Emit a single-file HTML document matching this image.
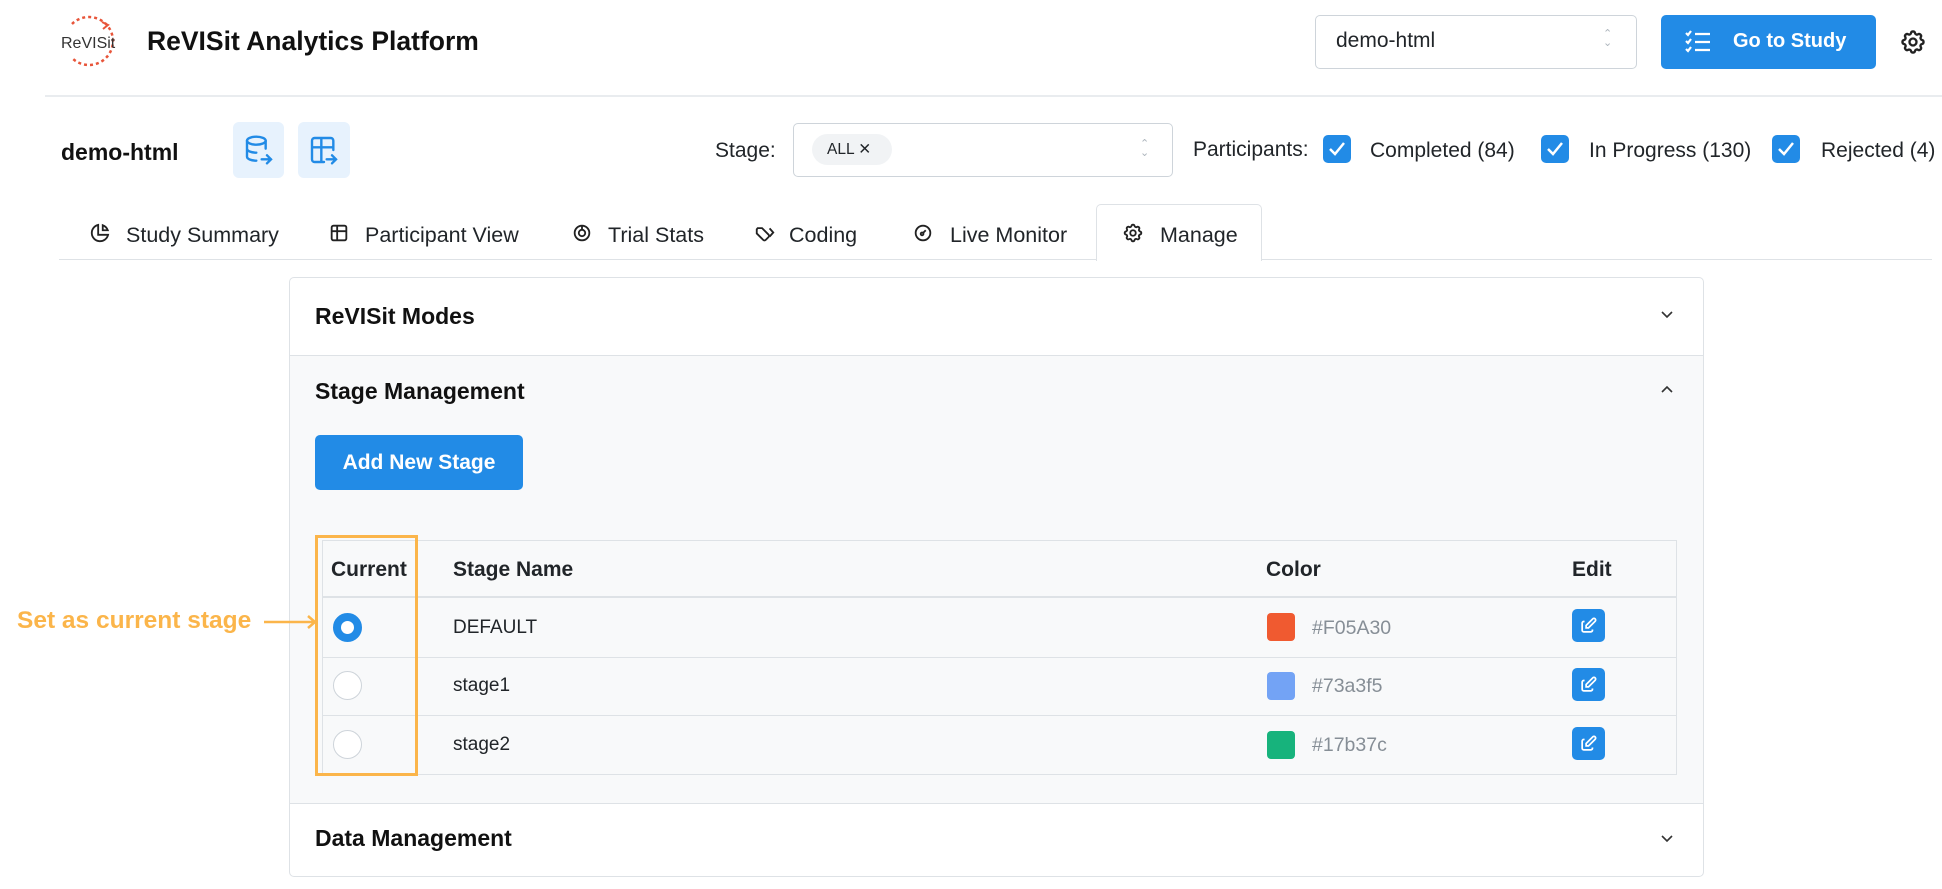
<!DOCTYPE html>
<html><head><meta charset="utf-8"><style>
*{box-sizing:border-box;margin:0;padding:0}
body{width:1942px;height:889px;background:#fff;font-family:"Liberation Sans",sans-serif;color:#212529;position:relative;overflow:hidden;font-size:19px}
.a{position:absolute}
.bold{font-weight:bold}
.cb{position:absolute;width:28px;height:28px;background:#228be6;border-radius:5px;top:135px}
.cb svg{position:absolute;left:5px;top:6px}
.p{font-size:21px}
.tab{position:absolute;top:223px;font-size:21.5px;color:#212529}
.tab svg{position:absolute;top:-1px}
.row{position:absolute;left:322px;width:1355px;border-bottom:1px solid #dee2e6}
.radio{position:absolute;left:333px;width:29px;height:29px;border-radius:50%;border:1.5px solid #ced4da;background:#fff}
.sw{position:absolute;left:1267px;width:28px;height:28px;border-radius:4px}
.hex{position:absolute;left:1312px;color:#868e96;font-size:19.5px}
.eb{position:absolute;left:1572px;width:33px;height:33px;border-radius:5px;background:#228be6}
.eb svg{position:absolute;left:7px;top:7px}
.h{font-size:23px;color:#111}
</style></head><body>
<!-- header -->
<svg class="a" style="left:58px;top:14px" width="64" height="54" viewBox="0 0 64 54">
<path d="M14 10 A24 24 0 1 1 14 44" fill="none" stroke="#e8553a" stroke-width="2.5" stroke-dasharray="3 3"/>
<path d="M44 8 l6 3 -5 4" fill="none" stroke="#e8553a" stroke-width="2"/>
<text x="3" y="34" font-family="Liberation Sans Narrow, Liberation Sans" font-size="16" fill="#333">ReVISit</text>
</svg>
<div class="a bold" style="left:147px;top:26px;font-size:26.5px;color:#111">ReVISit Analytics Platform</div>
<div class="a" style="left:1315px;top:15px;width:322px;height:54px;border:1px solid #ced4da;border-radius:5px"></div>
<div class="a p" style="left:1336px;top:29px">demo-html</div>
<div class="a" style="left:1603px;top:30px;font-size:11px;color:#adb5bd;line-height:9px">⌃<br>⌄</div>
<div class="a" style="left:1661px;top:15px;width:215px;height:54px;background:#228be6;border-radius:5px"></div>
<svg class="a" style="left:1684px;top:29px" width="28" height="26" viewBox="0 0 28 26" fill="none" stroke="#fff" stroke-width="2.2"><path d="M2 4l2 2 3-4M2 12l2 2 3-4M2 20l2 2 3-4M11 5h15M11 13h15M11 21h15"/></svg>
<div class="a bold" style="left:1733px;top:30px;font-size:20px;color:#fff">Go to Study</div>
<svg class="a" style="left:1899px;top:28px" width="28" height="28" viewBox="0 0 24 24" fill="none" stroke="#222" stroke-width="2"><path d="M10.3 4.3c.4-1.8 3-1.8 3.4 0a1.7 1.7 0 0 0 2.6 1.1c1.5-.9 3.3.8 2.4 2.4a1.7 1.7 0 0 0 1 2.5c1.8.4 1.8 3 0 3.4a1.7 1.7 0 0 0-1 2.6c.9 1.5-.9 3.300-2.4 2.4a1.7 1.7 0 0 0-2.6 1c-.4 1.8-3 1.8-3.4 0a1.7 1.7 0 0 0-2.5-1c-1.6.9-3.3-.9-2.4-2.4a1.7 1.7 0 0 0-1.1-2.6c-1.8-.4-1.8-3 0-3.4a1.7 1.7 0 0 0 1.1-2.5c-.9-1.6.9-3.3 2.4-2.4 1 .6 2.3.1 2.5-1.1z"/><circle cx="12" cy="12" r="3"/></svg>
<div class="a" style="left:45px;top:95px;width:1897px;height:2px;background:#e9ecef"></div>
<!-- row 2 -->
<div class="a bold" style="left:61px;top:139px;font-size:23px;color:#111">demo-html</div>
<div class="a" style="left:233px;top:122px;width:51px;height:56px;background:#e7f2fd;border-radius:6px"></div>
<svg class="a" style="left:243px;top:134px" width="32" height="32" viewBox="0 0 24 24" fill="none" stroke="#228be6" stroke-width="1.8" stroke-linecap="round"><ellipse cx="10" cy="5" rx="7" ry="3"/><path d="M3 5v12c0 1.7 3 3 7 3M17 5v6M3 11c0 1.7 3 3 7 3M14 19h7M18 16l3 3-3 3"/></svg>
<div class="a" style="left:298px;top:122px;width:52px;height:56px;background:#e7f2fd;border-radius:6px"></div>
<svg class="a" style="left:308px;top:134px" width="32" height="32" viewBox="0 0 24 24" fill="none" stroke="#228be6" stroke-width="1.8" stroke-linecap="round"><path d="M12 21H5a2 2 0 0 1-2-2V5a2 2 0 0 1 2-2h12a2 2 0 0 1 2 2v7M3 10h16M10 3v18M14 19h7M18 16l3 3-3 3"/></svg>
<div class="a p" style="left:715px;top:139px">Stage:</div>
<div class="a" style="left:793px;top:123px;width:380px;height:54px;border:1px solid #ced4da;border-radius:5px"></div>
<div class="a" style="left:812px;top:134px;width:80px;height:31px;background:#f1f3f5;border-radius:16px;font-size:15.5px;line-height:31px;padding-left:15px">ALL ✕</div>
<div class="a" style="left:1140px;top:140px;font-size:11px;color:#adb5bd;line-height:9px">⌃<br>⌄</div>
<div class="a p" style="left:1193px;top:138px">Participants:</div>
<div class="cb" style="left:1323px"><svg width="18" height="16" viewBox="0 0 18 16" fill="none" stroke="#fff" stroke-width="2.5"><path d="M2 8l5 5 9-11"/></svg></div>
<div class="a p" style="left:1370px;top:139px">Completed (84)</div>
<div class="cb" style="left:1541px"><svg width="18" height="16" viewBox="0 0 18 16" fill="none" stroke="#fff" stroke-width="2.5"><path d="M2 8l5 5 9-11"/></svg></div>
<div class="a p" style="left:1589px;top:139px">In Progress (130)</div>
<div class="cb" style="left:1772px"><svg width="18" height="16" viewBox="0 0 18 16" fill="none" stroke="#fff" stroke-width="2.5"><path d="M2 8l5 5 9-11"/></svg></div>
<div class="a p" style="left:1821px;top:139px">Rejected (4)</div>
<!-- tabs -->
<div class="a" style="left:59px;top:259px;width:1873px;height:1px;background:#dee2e6"></div>
<div class="a" style="left:1096px;top:204px;width:166px;height:57px;border:1px solid #dee2e6;border-bottom:none;background:#fff;border-radius:5px 5px 0 0"></div>
<div class="tab" style="left:89px"><svg width="22" height="22" viewBox="0 0 24 24" fill="none" stroke="#222" stroke-width="2"><path d="M10 3.2A9 9 0 1 0 20.8 14H10z"/><path d="M15 3.5A9 9 0 0 1 20.5 9H15z"/></svg><span style="margin-left:37px">Study Summary</span></div>
<div class="tab" style="left:328px"><svg width="22" height="22" viewBox="0 0 24 24" fill="none" stroke="#222" stroke-width="2"><rect x="4" y="4" width="16" height="16" rx="2"/><path d="M4 10h16M10 4v16"/></svg><span style="margin-left:37px">Participant View</span></div>
<div class="tab" style="left:571px"><svg width="22" height="22" viewBox="0 0 24 24" fill="none" stroke="#222" stroke-width="2"><circle cx="12" cy="12" r="8"/><circle cx="12" cy="12" r="3.5"/><path d="M12 4v4.5"/></svg><span style="margin-left:37px">Trial Stats</span></div>
<div class="tab" style="left:754px"><svg width="22" height="22" viewBox="0 0 24 24" fill="none" stroke="#222" stroke-width="2"><path d="M3 8v4.5l7 7a2 2 0 0 0 2.8 0l3-3a2 2 0 0 0 0-2.8l-7-7H4z"/><path d="M17 7l4 4.5-4 4.5"/></svg><span style="margin-left:35px">Coding</span></div>
<div class="tab" style="left:912px"><svg width="22" height="22" viewBox="0 0 24 24" fill="none" stroke="#222" stroke-width="2"><circle cx="12" cy="12" r="8"/><circle cx="11" cy="13" r="1.5"/><path d="M12 12l3-3"/></svg><span style="margin-left:38px">Live Monitor</span></div>
<div class="tab" style="left:1122px"><svg width="22" height="22" viewBox="0 0 24 24" fill="none" stroke="#222" stroke-width="2"><path d="M10.3 4.3c.4-1.8 3-1.8 3.4 0a1.7 1.7 0 0 0 2.6 1.1c1.5-.9 3.3.8 2.4 2.4a1.7 1.7 0 0 0 1 2.5c1.8.4 1.8 3 0 3.4a1.7 1.7 0 0 0-1 2.6c.9 1.5-.9 3.3-2.4 2.4a1.7 1.7 0 0 0-2.6 1c-.4 1.8-3 1.8-3.4 0a1.7 1.7 0 0 0-2.5-1c-1.6.9-3.3-.9-2.4-2.4a1.7 1.7 0 0 0-1.1-2.6c-1.8-.4-1.8-3 0-3.4a1.7 1.7 0 0 0 1.1-2.5c-.9-1.6.9-3.3 2.4-2.4 1 .6 2.3.1 2.5-1.1z"/><circle cx="12" cy="12" r="3"/></svg><span style="margin-left:38px">Manage</span></div>
<!-- accordion -->
<div class="a" style="left:289px;top:277px;width:1415px;height:600px;border:1px solid #dee2e6;border-radius:5px;background:#fff;overflow:hidden">
  <div class="a" style="left:0;top:77px;width:100%;height:449px;background:#f8f9fa;border-top:1px solid #dee2e6;border-bottom:1px solid #dee2e6"></div>
</div>
<div class="a bold h" style="left:315px;top:303px">ReVISit Modes</div>
<svg class="a" style="left:1660px;top:310px" width="14" height="10" viewBox="0 0 14 10" fill="none" stroke="#333" stroke-width="1.6"><path d="M2 2l5 5 5-5"/></svg>
<div class="a bold h" style="left:315px;top:378px">Stage Management</div>
<svg class="a" style="left:1660px;top:384px" width="14" height="10" viewBox="0 0 14 10" fill="none" stroke="#333" stroke-width="1.6"><path d="M2 8l5-5 5 5"/></svg>
<div class="a bold" style="left:315px;top:435px;width:208px;height:55px;background:#228be6;border-radius:5px;color:#fff;font-size:21px;text-align:center;line-height:55px">Add New Stage</div>
<!-- table -->
<div class="a" style="left:322px;top:540px;width:1355px;height:235px;border:1px solid #dee2e6;background:#f8f9fa"></div>
<div class="row" style="top:540px;height:58px;border-bottom:2px solid #dee2e6"></div>
<div class="row" style="top:598px;height:60px"></div>
<div class="row" style="top:658px;height:58px"></div>
<div class="a bold" style="left:331px;top:558px;font-size:21px">Current</div>
<div class="a bold" style="left:453px;top:558px;font-size:21px">Stage Name</div>
<div class="a bold" style="left:1266px;top:558px;font-size:21px">Color</div>
<div class="a bold" style="left:1572px;top:558px;font-size:21px">Edit</div>
<div class="radio" style="top:613px;border:8px solid #228be6"></div>
<div class="radio" style="top:671px"></div>
<div class="radio" style="top:730px"></div>
<div class="a" style="left:453px;top:617px">DEFAULT</div>
<div class="a" style="left:453px;top:675px">stage1</div>
<div class="a" style="left:453px;top:734px">stage2</div>
<div class="sw" style="top:613px;background:#f05a30"></div><div class="hex" style="top:617px">#F05A30</div>
<div class="sw" style="top:672px;background:#73a3f5"></div><div class="hex" style="top:675px">#73a3f5</div>
<div class="sw" style="top:731px;background:#17b37c"></div><div class="hex" style="top:734px">#17b37c</div>
<div class="eb" style="top:609px"><svg width="19" height="19" viewBox="0 0 24 24" fill="none" stroke="#fff" stroke-width="2.2"><path d="M7 7H6a2 2 0 0 0-2 2v9a2 2 0 0 0 2 2h9a2 2 0 0 0 2-2v-1"/><path d="M20.4 6.6a2.1 2.1 0 0 0-3-3L9 12v3h3z"/></svg></div>
<div class="eb" style="top:668px"><svg width="19" height="19" viewBox="0 0 24 24" fill="none" stroke="#fff" stroke-width="2.2"><path d="M7 7H6a2 2 0 0 0-2 2v9a2 2 0 0 0 2 2h9a2 2 0 0 0 2-2v-1"/><path d="M20.4 6.6a2.1 2.1 0 0 0-3-3L9 12v3h3z"/></svg></div>
<div class="eb" style="top:727px"><svg width="19" height="19" viewBox="0 0 24 24" fill="none" stroke="#fff" stroke-width="2.2"><path d="M7 7H6a2 2 0 0 0-2 2v9a2 2 0 0 0 2 2h9a2 2 0 0 0 2-2v-1"/><path d="M20.4 6.6a2.1 2.1 0 0 0-3-3L9 12v3h3z"/></svg></div>
<!-- annotation -->
<div class="a" style="left:315px;top:535px;width:103px;height:241px;border:3px solid #fbb54a"></div>
<div class="a bold" style="left:17px;top:607px;font-size:24.5px;color:#fbb54a">Set as current stage</div>
<svg class="a" style="left:264px;top:614px" width="54" height="16" viewBox="0 0 54 16" fill="none" stroke="#fbb54a" stroke-width="2.5"><path d="M0 8h50M44 2l7 6-7 6"/></svg>
<div class="a bold h" style="left:315px;top:825px">Data Management</div>
<svg class="a" style="left:1660px;top:834px" width="14" height="10" viewBox="0 0 14 10" fill="none" stroke="#333" stroke-width="1.6"><path d="M2 2l5 5 5-5"/></svg>
</body></html>
